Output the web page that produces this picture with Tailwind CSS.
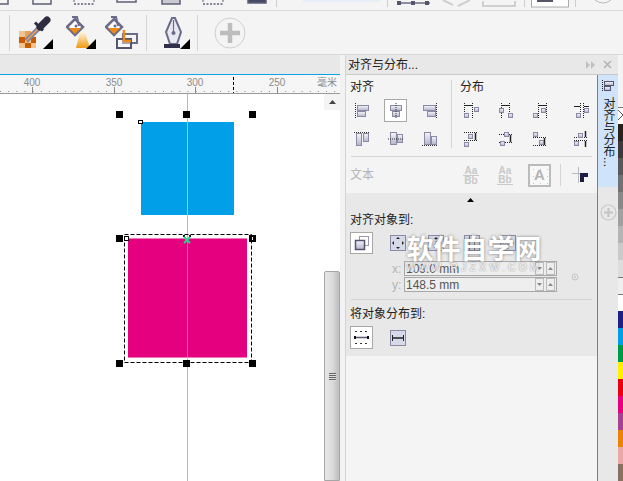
<!DOCTYPE html>
<html lang="zh-CN">
  <head>
    <meta charset="UTF-8" />
    <title>对齐与分布</title>
    <script src="https://cdn.jsdelivr.net/npm/@tailwindcss/browser@4"></script>
  </head>
  <body class="w-[623px] h-[481px] overflow-hidden relative bg-[#f4f4f4] text-[#222] text-[12px] font-['Liberation_Sans','Noto_Sans_CJK_SC',sans-serif]">
    <svg class="absolute w-0 h-0">
      <defs>
        <linearGradient id="bx" x1="0" y1="0" x2="0" y2="1">
          <stop offset="0" stop-color="#f6f6fa" />
          <stop offset="1" stop-color="#b4b4cc" />
        </linearGradient>
        <linearGradient id="cone" x1="0" y1="0" x2="0" y2="1">
          <stop offset="0" stop-color="#fff6e0" />
          <stop offset="1" stop-color="#ec9a12" />
        </linearGradient>
      </defs>
    </svg>

    <!-- top toolbar, cut off -->
    <div class="h-[11px] border-b border-[#d9d9d9] relative overflow-hidden">
      <svg width="623" height="10" class="block">
        <g fill="none" stroke="#5f5f78" stroke-width="1.5">
          <rect x="-8" y="-6" width="16" height="10" />
          <rect x="33" y="-6" width="18" height="10" />
          <rect x="117" y="-6" width="19" height="8" />
          <rect x="162" y="-6" width="18" height="10" fill="#c9c9d2" />
          <rect x="248" y="-6" width="18" height="9" fill="#454a63" />
          <path d="M74 4h21M203 4h21" stroke-dasharray="2 1.5" />
          <path d="M397 3h33" stroke="#6d6d86" />
        </g>
        <path d="M74 0v2M94 0v2M203 0v2M223 0v2" stroke="#5f5f78" />
        <rect x="303" y="0" width="77" height="2" fill="#e8eef8" />
        <path d="M276.500 0v7M387.500 0v7M524.500 0v7M575.500 0v7" stroke="#cfcfcf" />
        <g fill="#55556e"><rect x="397" y="1" width="4" height="4" /><rect x="411" y="1" width="4" height="4" /><rect x="425" y="1" width="4" height="4" /></g>
        <path d="M443 0l10 5M470 0l-12 6M483 1v5h32V1" fill="none" stroke="#d0d0d0" stroke-width="2" />
        <rect x="531.500" y="-3" width="37" height="10" fill="#fff" stroke="#aaa" />
        <rect x="537" y="0" width="16" height="2" fill="#55556e" />
        <path d="M595 0q8 6 16 0" fill="none" stroke="#bbb" />
      </svg>
    </div>

    <!-- second toolbar -->
    <div class="h-[44px] border-b border-[#d9d9d9] flex items-center">
      <div class="ml-[9px] w-px h-[36px] bg-[#d4d4d4]"></div>
      <svg class="ml-[9px]" width="34" height="33" viewBox="0 0 34 33">
        <g>
          <rect x="0" y="15" width="6" height="6" fill="#f0c48e" /><rect x="6" y="15" width="6" height="6" fill="#e9a25a" />
          <rect x="0" y="21" width="6" height="6" fill="#c85a00" /><rect x="6" y="21" width="6" height="6" fill="#f0c48e" /><rect x="12" y="21" width="5" height="6" fill="#c85a00" />
          <rect x="0" y="27" width="6" height="5" fill="#f0c48e" /><rect x="6" y="27" width="6" height="5" fill="#c85a00" /><rect x="12" y="27" width="5" height="5" fill="#f0c48e" />
        </g>
        <path d="M7 25L20 12" stroke="#8383a0" stroke-width="5" />
        <path d="M7 25L20 12" stroke="#e9a25a" stroke-width="1.500" />
        <path d="M16 6.500l8 8" stroke="#2d2d3f" stroke-width="3" />
        <path d="M21 11L28 4" stroke="#2d2d3f" stroke-width="7" stroke-linecap="round" />
        <path d="M24 33h10v-10z" fill="#000" />
      </svg>
      <svg class="ml-[13px]" width="30" height="33" viewBox="0 0 30 33">
        <path d="M1 11l8-8 8 8-8 8z" fill="#fff" stroke="#6c6c8a" stroke-width="2.500" />
        <path d="M3 12h12l-6 6z" fill="#ec8a12" />
        <path d="M6 1h5l2 9" fill="none" stroke="#6c6c8a" stroke-width="2" />
        <circle cx="10" cy="10" r="1.500" fill="#6c6c8a" />
        <path d="M14 16h5l5 16H10z" fill="url(#cone)" />
        <path d="M20 33h10v-10z" fill="#000" />
      </svg>
      <svg class="ml-[9px]" width="33" height="33" viewBox="0 0 33 33">
        <path d="M1 11l8-8 8 8-8 8z" fill="#fff" stroke="#6c6c8a" stroke-width="2.500" />
        <path d="M3 12h12l-6 6z" fill="#ec8a12" />
        <path d="M6 1h5l2 9" fill="none" stroke="#6c6c8a" stroke-width="2" />
        <circle cx="10" cy="10" r="1.500" fill="#6c6c8a" />
        <rect x="18" y="18" width="14" height="9" fill="none" stroke="#6c6c88" stroke-width="2" />
        <rect x="12" y="23" width="14" height="9" fill="#fff" fill-opacity=".4" stroke="#55556e" stroke-width="2" />
        <path d="M19 14v11h7" fill="none" stroke="#ec8a12" stroke-width="2.500" />
      </svg>
      <div class="ml-[8px] w-px h-[36px] bg-[#d4d4d4]"></div>
      <svg class="ml-[16px]" width="27" height="33" viewBox="0 0 27 33">
        <path d="M9 2h3l6 14-4 12H7L3 16z" fill="#e9e9f0" stroke="#6c6c8a" stroke-width="2" />
        <path d="M10.500 4v12" stroke="#6c6c8a" stroke-width="1.200" />
        <circle cx="10.500" cy="17" r="2" fill="#6c6c8a" />
        <rect x="1" y="28" width="16" height="4" fill="#30304a" />
        <path d="M17 33h10v-10z" fill="#000" />
      </svg>
      <div class="ml-[7px] w-px h-[36px] bg-[#d4d4d4]"></div>
      <svg class="ml-[16px]" width="32" height="32" viewBox="0 0 32 32">
        <circle cx="16" cy="16" r="15" fill="none" stroke="#cfcfcf" />
        <path d="M16 6v20M6 16h20" stroke="#bdbdbd" stroke-width="4.500" />
      </svg>
    </div>

    <div class="flex h-[426px]">
      <!-- drawing side -->
      <div class="w-[340px] flex flex-col">
        <div class="h-[20px] bg-[#e8e8e8] border-b border-[#0ea2ea]"></div>
        <div class="h-[19px] bg-[#f6f6f6] border-b border-[#9a9a9a]">
          <svg width="340" height="18" class="block">
            <g font-size="10" fill="#8c8c8c" text-anchor="middle" font-family="Liberation Sans">
              <text x="32" y="11">400</text>
              <text x="114" y="11">350</text>
              <text x="195" y="11">300</text>
              <text x="277" y="11">250</text>
              <text x="327" y="11" font-family="Noto Sans CJK SC" font-size="10">毫米</text>
            </g>
            <path d="M0 16.500h340" stroke="#888" stroke-dasharray="1 7.150" />
            <path d="M32.500 12v6M114.500 12v6M195.500 12v6M277.500 12v6" stroke="#888" />
            <path d="M233.500 2v16" stroke="#000" stroke-dasharray="3 2" />
          </svg>
        </div>
        <div class="relative flex-1 bg-white overflow-hidden">
          <!-- objects on the page -->
          <div class="absolute left-[141px] top-[28px] w-[93px] h-[93px] bg-[#009fe8]"></div>
          <div class="absolute left-[128px] top-[144px] w-[119px] h-[120px] bg-[#e4007f] border-y border-[#ee77b5]"></div>
          <div class="absolute left-[187px] top-0 w-px h-full bg-[#bcbcbc]"></div>
          <div class="absolute left-[187px] top-[145px] w-px h-[118px] bg-[#ea5a9e]"></div>
          <svg class="absolute left-[124px] top-[140px]" width="128" height="129"><rect x="0.500" y="0.500" width="127" height="128" fill="none" stroke="#000" stroke-dasharray="4 2" /></svg>

          <div class="absolute left-[116px] top-[17px] size-[7px] bg-black"></div>
          <div class="absolute left-[183px] top-[17px] size-[7px] bg-black"></div>
          <div class="absolute left-[249px] top-[17px] size-[7px] bg-black"></div>
          <div class="absolute left-[138px] top-[26px] w-[5px] h-[4px] bg-white border border-black"></div>

          <div class="absolute left-[116px] top-[141px] size-[7px] bg-black"></div>
          <div class="absolute left-[124px] top-[142px] size-[5px] bg-white border border-black"></div>
          <div class="absolute left-[249px] top-[141px] size-[7px] bg-black flex items-center justify-center"><div class="w-px h-[3px] bg-white"></div></div>
          <svg class="absolute left-[183px] top-[141px]" width="8" height="9" viewBox="0 0 8 9">
            <path d="M0 0h2v2H0zM6 0h2v2H6z" fill="#111" />
            <path d="M1 8l6-6M7 8L1 2" stroke="#22d68a" stroke-width="2" />
          </svg>
          <div class="absolute left-[116px] top-[266px] size-[7px] bg-black"></div>
          <div class="absolute left-[183px] top-[266px] size-[7px] bg-black"></div>
          <div class="absolute left-[249px] top-[266px] size-[7px] bg-black"></div>

          <!-- vertical scrollbar -->
          <div class="absolute right-0 top-0 bottom-0 w-[16px] flex flex-col">
            <div class="h-[16px] bg-[#f4f4f4] flex items-center justify-center">
              <svg width="7" height="4"><path d="M0 4h7L3.500 0z" fill="#444" /></svg>
            </div>
            <div class="h-[161px]"></div>
            <div class="flex-1 border border-[#a6a6a6] rounded-t-[2px] bg-gradient-to-r from-[#e6e6e6] via-[#dcdcdc] to-[#bdbdc2] flex items-center justify-center pt-[2px]">
              <div class="w-[7px] h-[8px] bg-[repeating-linear-gradient(#666_0_1px,#ddd_1px_2px)]"></div>
            </div>
          </div>
        </div>
      </div>

      <!-- docker -->
      <div class="w-[6px] border-r border-[#d4d4d4] bg-[#f2f2f2]"></div>
      <div class="w-[272px] flex flex-col">
        <div class="h-[20px] bg-[#e8e8e8] border-b border-[#c9c9c9] flex items-center pl-[2px]">
          <span class="flex-1">对齐与分布...</span>
          <svg class="mr-[8px]" width="9" height="8"><path d="M0 0l4 4-4 4zM5 0l4 4-4 4z" fill="#c0c0c0" /></svg>
          <svg class="mr-[6px]" width="9" height="9"><path d="M1 1l7 7M8 1l-7 7" stroke="#b4b4b4" stroke-width="1.600" /></svg>
        </div>
        <div class="flex flex-1">
          <!-- panel body -->
          <div class="w-[252px] border-r border-[#12a0e8] flex flex-col">
            <div class="flex h-[81px] pl-[4px]">
              <div class="w-[101px]">
                <div class="h-[24px] leading-[24px]">对齐</div>
                <div class="grid grid-cols-[23px_23px_23px] gap-x-[11px] gap-y-[5px]">
                  <div class="h-[23px] flex items-center justify-center">
                    <svg width="16" height="16"><path d="M1.500 0v16" stroke="#333" stroke-dasharray="1 1" /><g fill="url(#bx)" stroke="#8a8aa6"><rect x="3.500" y="2.500" width="11" height="5" /><rect x="3.500" y="8.500" width="8" height="5" /></g></svg>
                  </div>
                  <div class="h-[23px] flex items-center justify-center bg-white border border-[#a8a8a8]">
                    <svg width="16" height="16"><g fill="url(#bx)" stroke="#8a8aa6"><rect x="2.500" y="2.500" width="11" height="5" /><rect x="4.500" y="8.500" width="7" height="5" /></g><path d="M8 0v16" stroke="#333" stroke-dasharray="1 1" /></svg>
                  </div>
                  <div class="h-[23px] flex items-center justify-center">
                    <svg width="16" height="16"><path d="M14.500 0v16" stroke="#333" stroke-dasharray="1 1" /><g fill="url(#bx)" stroke="#8a8aa6"><rect x="1.500" y="2.500" width="12" height="5" /><rect x="5.500" y="8.500" width="8" height="5" /></g></svg>
                  </div>
                  <div class="h-[23px] flex items-center justify-center">
                    <svg width="16" height="16"><path d="M0 1.500h16" stroke="#333" stroke-dasharray="1 1" /><g fill="url(#bx)" stroke="#8a8aa6"><rect x="2.500" y="2.500" width="5" height="12" /><rect x="9.500" y="2.500" width="5" height="8" /></g></svg>
                  </div>
                  <div class="h-[23px] flex items-center justify-center">
                    <svg width="16" height="16"><g fill="url(#bx)" stroke="#8a8aa6"><rect x="2.500" y="1.500" width="6" height="12" /><rect x="9.500" y="3.500" width="5" height="8" /></g><path d="M0 8h16" stroke="#333" stroke-dasharray="1 1" /></svg>
                  </div>
                  <div class="h-[23px] flex items-center justify-center">
                    <svg width="16" height="16"><path d="M0 14.500h16" stroke="#333" stroke-dasharray="1 1" /><g fill="url(#bx)" stroke="#8a8aa6"><rect x="2.500" y="1.500" width="6" height="12" /><rect x="9.500" y="5.500" width="5" height="8" /></g></svg>
                  </div>
                </div>
              </div>
              <div class="w-px h-[68px] mt-[5px] bg-[#d4d4d4]"></div>
              <div class="pl-[7px]">
                <div class="h-[24px] leading-[24px] pl-[1px]">分布</div>
                <div class="grid grid-cols-[35px_34px_41px_23px] gap-y-[5px]">
                  <div class="h-[23px] w-[23px] flex items-center justify-center">
                    <svg width="16" height="16"><path d="M1.500 0v15M9.500 0v15" stroke="#222" stroke-dasharray="1 1" /><path d="M2 2.500h7" stroke="#222" /><g fill="url(#bx)" stroke="#8a8aa6"><rect x="1.500" y="10.500" width="4" height="4" /><rect x="11.500" y="4.500" width="4" height="4" /></g></svg>
                  </div>
                  <div class="h-[23px] w-[23px] flex items-center justify-center">
                    <svg width="16" height="16"><path d="M3.500 0v15M11.500 0v15" stroke="#222" stroke-dasharray="1 1" /><path d="M4 2.500h7" stroke="#222" /><g fill="url(#bx)" stroke="#8a8aa6"><rect x="1.500" y="5.500" width="4" height="4" /><rect x="10.500" y="10.500" width="4" height="4" /></g></svg>
                  </div>
                  <div class="h-[23px] w-[23px] flex items-center justify-center">
                    <svg width="16" height="16"><path d="M6.500 0v15M14.500 0v15" stroke="#222" stroke-dasharray="1 1" /><path d="M7 2.500h7" stroke="#222" /><g fill="url(#bx)" stroke="#8a8aa6"><rect x="1.500" y="10.500" width="4" height="4" /><rect x="9.500" y="5.500" width="4" height="4" /></g></svg>
                  </div>
                  <div class="h-[23px] w-[23px] flex items-center justify-center">
                    <svg width="16" height="16"><path d="M7.500 0v15M10.500 0v15" stroke="#222" stroke-dasharray="1 1" /><path d="M1 3.500h6M11 3.500h5" stroke="#222" /><g fill="url(#bx)" stroke="#8a8aa6"><rect x="3.500" y="10.500" width="4" height="4" /><rect x="11.500" y="5.500" width="4" height="4" /></g></svg>
                  </div>
                  <div class="h-[23px] w-[23px] flex items-center justify-center">
                    <svg width="16" height="16"><path d="M1 1.500h13M1 9.500h13" stroke="#222" stroke-dasharray="1 1" /><path d="M12.500 2v7" stroke="#222" stroke-width="1.500" /><g fill="url(#bx)" stroke="#8a8aa6"><rect x="5.500" y="3.500" width="4" height="4" /><rect x="1.500" y="11.500" width="4" height="4" /></g></svg>
                  </div>
                  <div class="h-[23px] w-[23px] flex items-center justify-center">
                    <svg width="16" height="16"><path d="M1 3.500h13M1 11.500h13" stroke="#222" stroke-dasharray="1 1" /><path d="M12.500 4v7" stroke="#222" stroke-width="1.500" /><g fill="url(#bx)" stroke="#8a8aa6"><rect x="6.500" y="1.500" width="4" height="4" /><rect x="2.500" y="10.500" width="4" height="4" /></g></svg>
                  </div>
                  <div class="h-[23px] w-[23px] flex items-center justify-center">
                    <svg width="16" height="16"><path d="M1 6.500h13M1 14.500h13" stroke="#222" stroke-dasharray="1 1" /><path d="M12.500 7v7" stroke="#222" stroke-width="1.500" /><g fill="url(#bx)" stroke="#8a8aa6"><rect x="1.500" y="1.500" width="4" height="4" /><rect x="7.500" y="9.500" width="4" height="4" /></g></svg>
                  </div>
                  <div class="h-[23px] w-[23px] flex items-center justify-center">
                    <svg width="16" height="16"><path d="M1 6.500h13M1 9.500h13" stroke="#222" stroke-dasharray="1 1" /><path d="M12.500 0v6M12.500 10v6" stroke="#222" stroke-width="1.500" /><g fill="url(#bx)" stroke="#8a8aa6"><rect x="5.500" y="2.500" width="4" height="4" /><rect x="1.500" y="10.500" width="4" height="4" /></g></svg>
                  </div>
                </div>
              </div>
            </div>
            <div class="mx-[5px] h-px bg-[#d4d4d4]"></div>
            <div class="h-[36px] flex items-center pl-[4px]">
              <span class="w-[24px] text-[#b4b4b4]">文本</span>
              <div class="ml-[89px] w-[16px] text-center text-[10px] leading-[9px] font-bold text-[#c9c9c9]"><div class="border-b border-[#c9c9c9]">Aa</div><div>Bb</div></div>
              <div class="ml-[18px] w-[16px] text-center text-[10px] leading-[9px] font-bold text-[#c9c9c9]"><div>Aa</div><div class="border-b border-[#c9c9c9]">Bb</div></div>
              <div class="ml-[15px] size-[23px] border-2 border-[#bbbbbb] bg-[radial-gradient(#c4c4c4_0.7px,#f8f8f8_1px)] bg-[length:7px_7px] flex items-center justify-center font-bold text-[15px] text-[#b4b4b4]">A</div>
              <div class="ml-[9px] w-px h-[22px] bg-[#d4d4d4]"></div>
              <svg class="ml-[11px]" width="16" height="16"><path d="M0 6.500h16M6.500 0v16" stroke="#b9b9b9" /><path d="M8 6h8v4h-4v5H8z" fill="#1c1c46" /></svg>
            </div>
            <div class="h-[163px] bg-[#e8e8e8] flex flex-col">
              <div class="h-[17px] flex justify-center pt-[5px] pr-[2px]">
                <svg width="7" height="4"><path d="M0 4h7L3.500 0z" fill="#000" /></svg>
              </div>
              <div class="h-[20px] leading-[20px] pl-[4px]">对齐对象到:</div>
              <div class="mt-[2px] flex items-center pl-[4px] h-[22px]">
                <div class="w-[23px] h-[22px] bg-white border border-[#a8a8a8] flex items-center justify-center">
                  <svg width="16" height="16"><rect x="5.500" y="1.500" width="9" height="9" fill="none" stroke="#9a9ab0" /><rect x="1.500" y="5.500" width="9" height="9" fill="url(#bx)" stroke="#55556e" stroke-width="1.500" /></svg>
                </div>
                <svg class="ml-[17px]" width="16" height="16"><rect x="0.500" y="0.500" width="15" height="15" fill="#d6d9e8" stroke="#8a8aa8" /><path d="M8 2l-2 2h4zM8 14l-2-2h4zM2 8l2-2v4zM14 8l-2-2v4z" fill="#222" /></svg>
                <svg class="ml-[22px]" width="16" height="16"><rect x="0.500" y="0.500" width="15" height="15" fill="#d6d9e8" stroke="#8a8aa8" /><path d="M8 2l-2 2h4zM8 14l-2-2h4z" fill="#222" /><path d="M8 4v8" stroke="#666" stroke-dasharray="1 1" /></svg>
                <svg class="ml-[20px]" width="16" height="16"><rect x="0.500" y="0.500" width="15" height="15" fill="#d6d9e8" stroke="#8a8aa8" /><path d="M1 5.500h14M1 10.500h14M5.500 1v14M10.500 1v14" stroke="#666" /></svg>
                <svg class="ml-[20px]" width="16" height="16"><rect x="0.500" y="0.500" width="15" height="15" fill="#d6d9e8" stroke="#8a8aa8" /><path d="M8 1v14M1 8h14" stroke="#666" stroke-dasharray="1 1" /></svg>
              </div>
              <div class="mt-[7px] flex flex-col gap-px">
                <div class="flex items-center h-[15px]">
                  <span class="ml-[46px] w-[12px] text-[#b4b4b4]">x:</span>
                  <div class="w-[153px] h-[15px] border border-[#a8a8a8] bg-[#eeeeee] flex items-center pl-[1px] text-[12px] text-[#555]">
                    <span class="flex-1">109.0 mm</span>
                    <div class="w-[9px] h-[13px] border border-[#bbb] mr-[2px] flex items-center justify-center"><svg width="5" height="3"><path d="M0 0h5L2.500 3z" fill="#888" /></svg></div>
                    <div class="w-[9px] h-[13px] border border-[#bbb] mr-[1px] flex items-center justify-center"><svg width="5" height="3"><path d="M0 3h5L2.500 0z" fill="#888" /></svg></div>
                  </div>
                </div>
                <div class="flex items-center h-[15px]">
                  <span class="ml-[46px] w-[12px] text-[#b4b4b4]">y:</span>
                  <div class="w-[153px] h-[15px] border border-[#a8a8a8] bg-[#eeeeee] flex items-center pl-[1px] text-[12px] text-[#555]">
                    <span class="flex-1">148.5 mm</span>
                    <div class="w-[9px] h-[13px] border border-[#bbb] mr-[2px] flex items-center justify-center"><svg width="5" height="3"><path d="M0 0h5L2.500 3z" fill="#888" /></svg></div>
                    <div class="w-[9px] h-[13px] border border-[#bbb] mr-[1px] flex items-center justify-center"><svg width="5" height="3"><path d="M0 3h5L2.500 0z" fill="#888" /></svg></div>
                  </div>
                </div>
              </div>
              <div class="mt-[7px] mx-[5px] h-px bg-[#d4d4d4]"></div>
              <div class="mt-[4px] h-[20px] leading-[20px] pl-[4px]">将对象分布到:</div>
              <div class="mt-[2px] flex items-center pl-[4px] h-[23px]">
                <div class="w-[23px] h-[23px] bg-white border border-[#a8a8a8] flex items-center justify-center">
                  <svg width="17" height="17"><path d="M2 2.500h14M2 14.500h14" stroke="#333" stroke-dasharray="2 3" /><path d="M2 8.500h13" stroke="#55556e" stroke-width="1.500" /><path d="M1 8.500h2M14 8.500h2" stroke="#111" stroke-width="3" /></svg>
                </div>
                <svg class="ml-[17px]" width="16" height="16"><rect x="0.500" y="0.500" width="15" height="15" fill="#d6d9e8" stroke="#8a8aa8" /><path d="M2 8h12" stroke="#222" stroke-width="1.500" /><path d="M2.500 5v6M13.500 5v6" stroke="#222" /></svg>
              </div>
            </div>
          </div>
          <!-- vertical tab -->
          <div class="w-[20px] bg-[#e8e8e8] flex flex-col items-center">
            <div class="h-[112px] w-full bg-[#cfe3fb] flex flex-col items-center pt-[5px]">
              <svg width="12" height="12"><path d="M0.500 0v12" stroke="#222" stroke-dasharray="1 1" /><g fill="url(#bx)" stroke="#55556e"><rect x="2.500" y="1.500" width="9" height="4" /><rect x="2.500" y="6.500" width="6" height="4" /></g></svg>
              <span class="mt-[5px] [writing-mode:vertical-rl] leading-[20px]">对齐与分布...</span>
            </div>
            <svg class="mt-[17px]" width="17" height="17"><circle cx="8.500" cy="8.500" r="7.500" fill="none" stroke="#c8c8c8" stroke-width="1.200" /><path d="M8.500 4v9M4 8.500h9" stroke="#c4c4c4" stroke-width="2" /></svg>
          </div>
        </div>
      </div>
      <!-- colour palette -->
      <div class="w-[5px] flex flex-col">
        <div class="h-[54px]"></div>
        <svg class="shrink-0" width="5" height="17"><rect width="5" height="17" fill="#fff" /><path d="M0 3l5 5M0 13l5-5" stroke="#555" /><path d="M0 .5h5" stroke="#777" /></svg>
        <div class="h-[17px] shrink-0 bg-[#2b211c]"></div>
        <div class="h-[17px] shrink-0 bg-[#3f3a39]"></div>
        <div class="h-[17px] shrink-0 bg-[#595757]"></div>
        <div class="h-[17px] shrink-0 bg-[#727171]"></div>
        <div class="h-[17px] shrink-0 bg-[#898989]"></div>
        <div class="h-[17px] shrink-0 bg-[#9fa0a0]"></div>
        <div class="h-[17px] shrink-0 bg-[#b5b5b6]"></div>
        <div class="h-[17px] shrink-0 bg-[#c9caca]"></div>
        <div class="h-[17px] shrink-0 bg-[#dcdddd]"></div>
        <div class="h-[17px] shrink-0 bg-[#efefef] border-t border-[#777]"></div>
        <div class="h-[17px] shrink-0 bg-white border-t border-[#777]"></div>
        <div class="h-[17px] shrink-0 bg-[#1d2088]"></div>
        <div class="h-[17px] shrink-0 bg-[#00a0e9]"></div>
        <div class="h-[17px] shrink-0 bg-[#009944]"></div>
        <div class="h-[17px] shrink-0 bg-[#fff100]"></div>
        <div class="h-[17px] shrink-0 bg-[#e60012]"></div>
        <div class="h-[17px] shrink-0 bg-[#e4007f]"></div>
        <div class="h-[17px] shrink-0 bg-[#a84190]"></div>
        <div class="h-[17px] shrink-0 bg-[#ee8208]"></div>
        <div class="h-[17px] shrink-0 bg-[#eaa8a8]"></div>
        <div class="h-[17px] shrink-0 bg-[#8a7060]"></div>
      </div>
    </div>

    <!-- site watermark over the panel -->
    <div class="absolute left-[404px] top-[233px] w-[140px] text-center pointer-events-none">
      <div class="text-[27px] leading-[30px] font-bold text-white font-['Noto_Sans_CJK_SC',sans-serif] [text-shadow:0_0_3px_#777]">软件自学网</div>
      <div class="text-[10px] leading-[9px] tracking-[3.5px] whitespace-nowrap text-[#f4f4f4] [text-shadow:0_0_2px_#777]">WWW.RJZXW.COM</div>
    </div>
    <!-- small target mark next to the fields -->
    <svg class="absolute left-[571px] top-[273px]" width="8" height="8"><circle cx="4" cy="4" r="3" fill="none" stroke="#c4c4c4" /><circle cx="4" cy="4" r="1" fill="#c4c4c4" /></svg>
  </body>
</html>
